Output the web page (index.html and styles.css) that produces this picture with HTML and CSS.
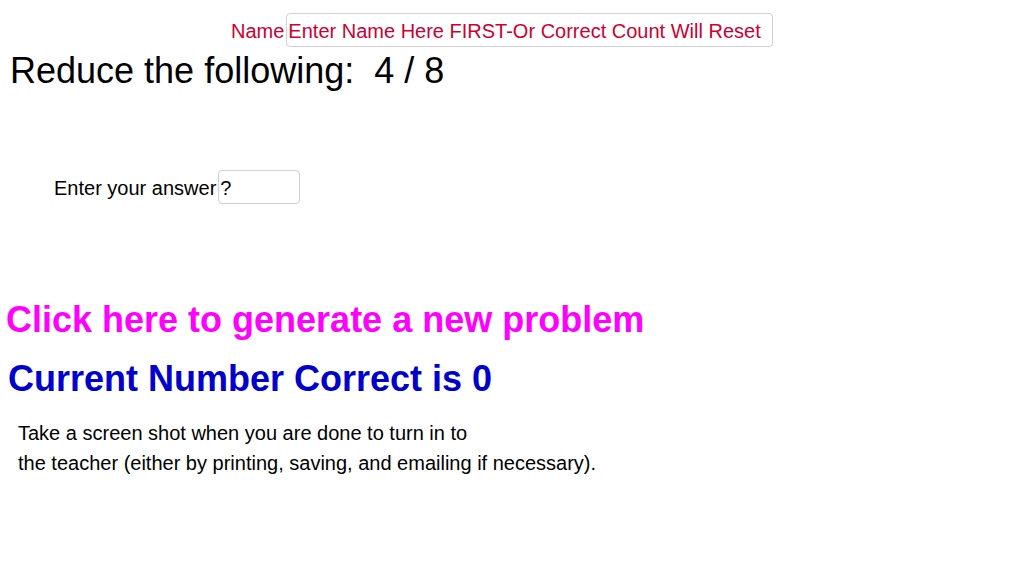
FILE: index.html
```html
<!DOCTYPE html>
<html>
<head>
<meta charset="utf-8">
<link rel="stylesheet" href="styles.css">
</head>
<body>
<div class="app">
  <div class="name-row">
    <span class="name-label">Name</span>
    <div class="field name-field">Enter Name Here FIRST-Or Correct Count Will Reset</div>
  </div>
  <h1 class="problem">Reduce the following:&nbsp; 4 / 8</h1>
  <div class="answer-row">
    <span class="answer-label">Enter your answer</span>
    <div class="field answer-field">?</div>
  </div>
  <div class="new-problem">Click here to generate a new problem</div>
  <div class="count">Current Number Correct is 0</div>
  <p class="note">Take a screen shot when you are done to turn in to<br>the teacher (either by printing, saving, and emailing if necessary).</p>
</div>
</body>
</html>
```
FILE: styles.css
```css
html, body {
  margin: 0;
  padding: 0;
  background: #ffffff;
}
.app {
  width: 1024px;
  height: 564px;
  font-family: "Liberation Sans", Arial, sans-serif;
  color: #000;
  overflow: hidden;
}
.name-row {
  display: flex;
  align-items: center;
  padding-left: 231px;
  padding-top: 13px;
  color: #cc0033;
  font-size: 20px;
}
.field {
  box-sizing: border-box;
  height: 34px;
  border: 1px solid #d0d0d0;
  border-radius: 4px;
  display: flex;
  align-items: center;
  padding-left: 2px;
  padding-top: 2px;
  background: #fff;
}
.name-label,
.answer-label {
  padding-top: 2px;
}
.name-field {
  width: 487px;
  margin-left: 2px;
  padding-left: 1px;
}
.problem {
  margin: 0;
  padding-left: 10px;
  font-size: 36px;
  font-weight: normal;
  line-height: 42px;
  margin-top: 3px;
}
.answer-row {
  display: flex;
  align-items: center;
  padding-left: 54px;
  margin-top: 78px;
  font-size: 20px;
}
.answer-field {
  width: 82px;
  margin-left: 2px;
  padding-left: 1px;
}
.new-problem {
  margin-top: 96px;
  padding-left: 6px;
  font-size: 36px;
  font-weight: bold;
  color: #ff00ff;
  line-height: 40px;
}
.count {
  margin-top: 19px;
  padding-left: 8px;
  font-size: 36px;
  font-weight: bold;
  color: #0000cc;
  line-height: 40px;
}
.note {
  margin: 19px 0 0;
  padding-left: 18px;
  font-size: 20px;
  line-height: 30px;
}
```
